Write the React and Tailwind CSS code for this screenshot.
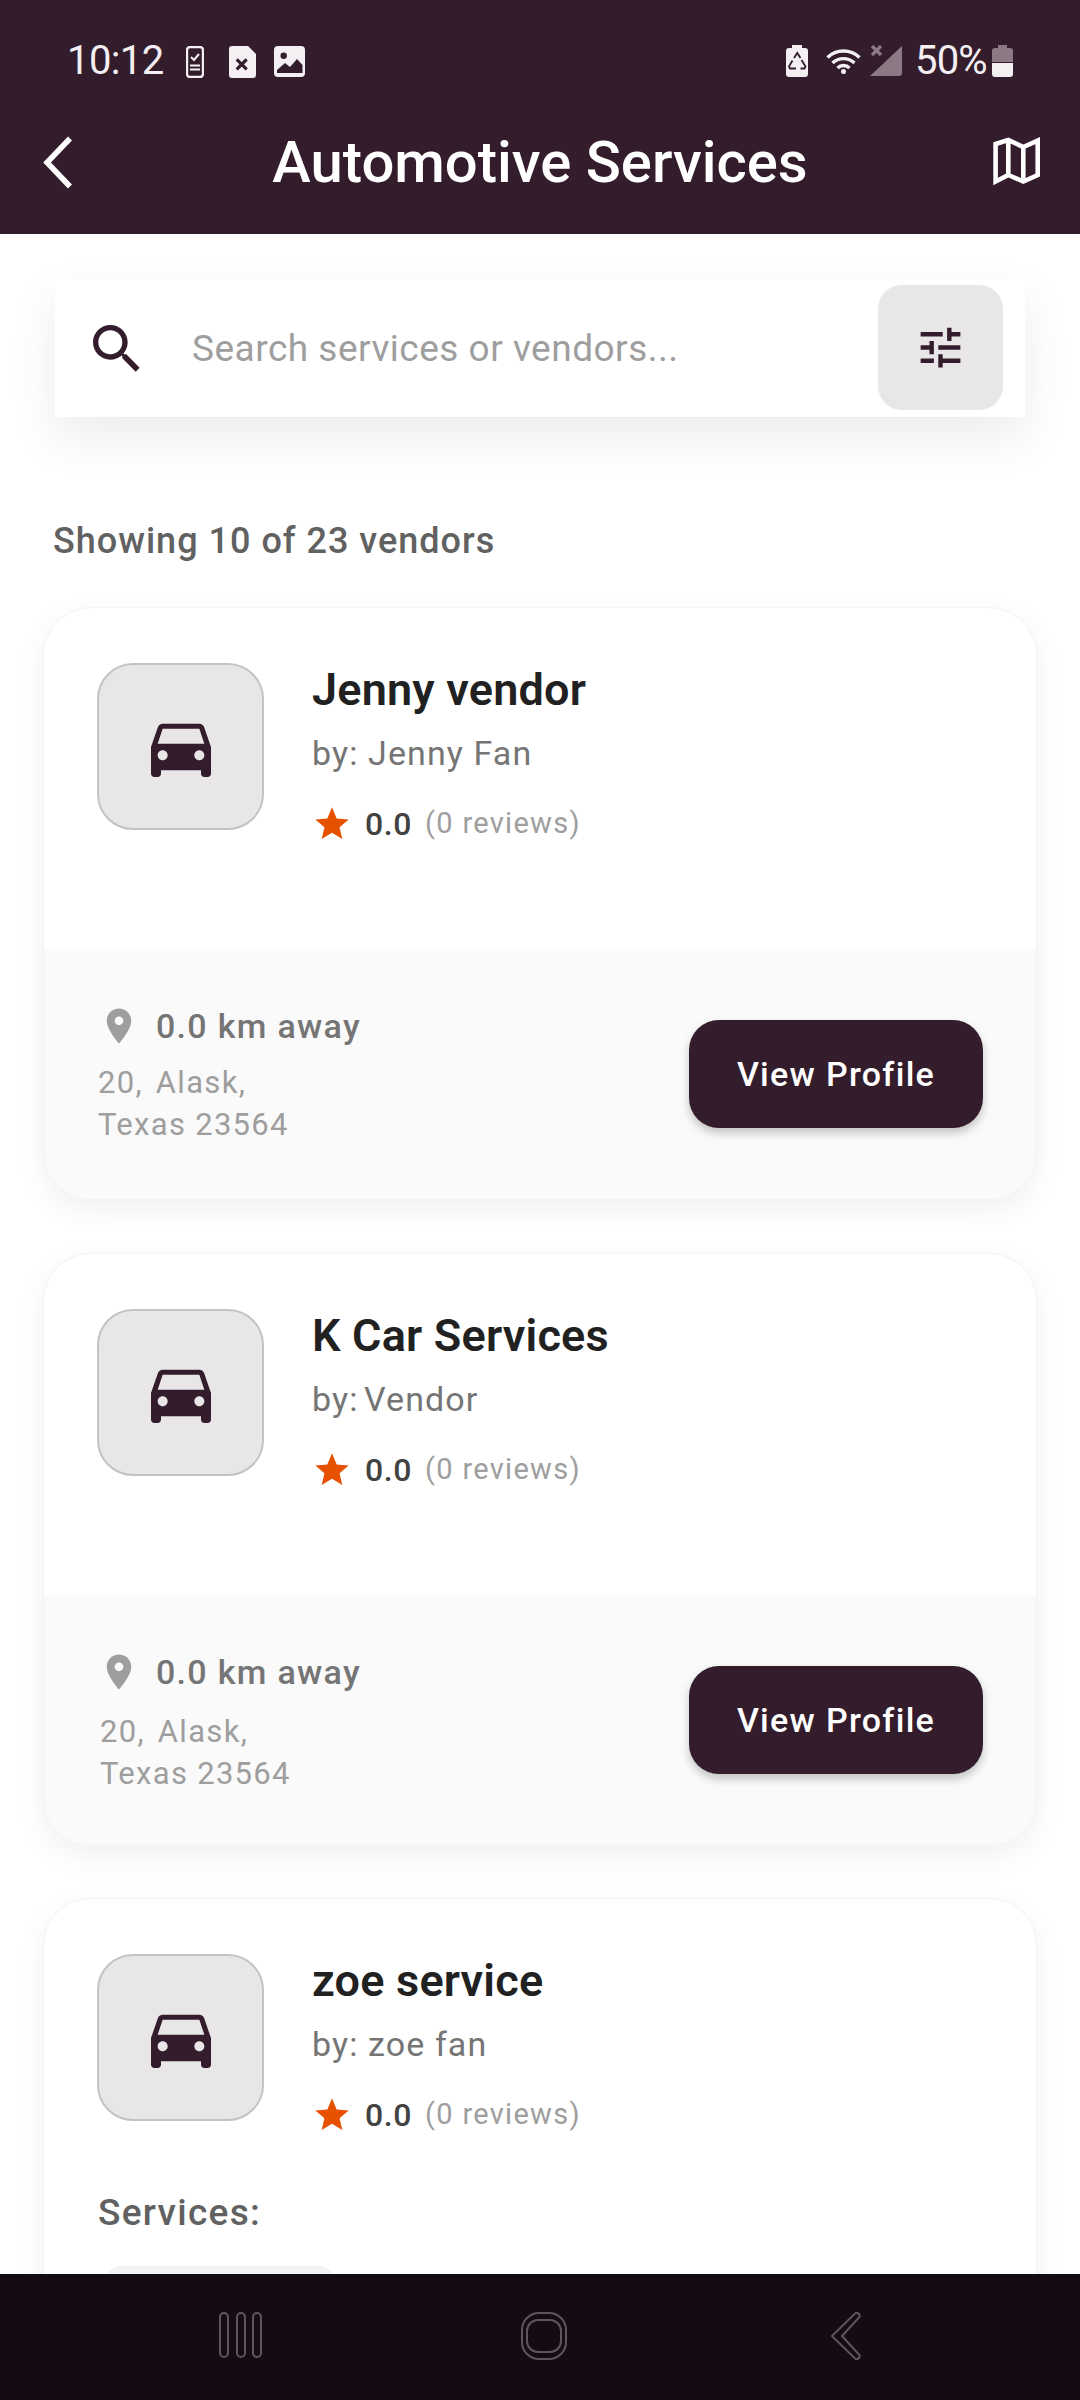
import React from "react";

const CAR = "M18.92 6.01C18.72 5.42 18.16 5 17.5 5h-11c-.66 0-1.21.42-1.42 1.01L3 12v8c0 .55.45 1 1 1h1c.55 0 1-.45 1-1v-1h12v1c0 .55.45 1 1 1h1c.55 0 1-.45 1-1v-8l-2.08-5.99zM6.5 16c-.83 0-1.5-.67-1.5-1.5S5.67 13 6.5 13s1.5.67 1.5 1.5S7.33 16 6.5 16zm11 0c-.83 0-1.5-.67-1.5-1.5s.67-1.5 1.5-1.5 1.5.67 1.5 1.5-.67 1.5-1.5 1.5zM5 11l1.5-4.5h11L19 11H5z";
const STAR = "M12 17.27L18.18 21l-1.64-7.03L22 9.24l-7.19-.61L12 2 9.19 8.63 2 9.24l5.46 4.73L5.82 21z";
const PIN = "M12 2C8.13 2 5 5.13 5 9c0 5.25 7 13 7 13s7-7.75 7-13c0-3.87-3.13-7-7-7zm0 9.5c-1.38 0-2.5-1.12-2.5-2.5s1.12-2.5 2.5-2.5 2.5 1.12 2.5 2.5-1.12 2.5-2.5 2.5z";
const SEARCH = "M15.5 14h-.79l-.28-.27C15.41 12.59 16 11.11 16 9.5 16 5.91 13.09 3 9.5 3S3 5.91 3 9.5 5.91 16 9.5 16c1.61 0 3.09-.59 4.23-1.57l.27.28v.79l5 4.99L20.49 19l-4.99-5zm-6 0C7.01 14 5 11.99 5 9.5S7.01 5 9.5 5 14 7.01 14 9.5 11.99 14 9.5 14z";
const TUNE = "M3 17v2h6v-2H3zM3 5v2h10V5H3zm10 16v-2h8v-2h-8v-2h-2v6h2zM7 9v2H3v2h4v2h2V9H7zm14 4v-2H11v2h10zm-6-4h2V7h4V5h-4V3h-2v6z";

function StatusBar() {
  return (
    <div className="flex h-[94px] items-end pb-[14px] pl-[67px] pr-[67px] text-[#f4eff2]">
      <span className="relative top-[1px] w-[99px] text-[40px] leading-[40px] tracking-[-0.6px]">10:12</span>
      <svg viewBox="0 0 18 32" className="relative top-[-2px] ml-[20px] h-[32px] w-[18px] shrink-0">
        <rect x="1" y="1" width="16" height="30" rx="3" fill="none" stroke="#f4eff2" strokeWidth="2.4" />
        <path d="M5 11l3 3 5-6" fill="none" stroke="#f4eff2" strokeWidth="2" />
        <path d="M4 19.5h10M4 23.5h10" stroke="#f4eff2" strokeWidth="2" />
      </svg>
      <svg viewBox="0 0 27 32" className="relative top-[-2px] ml-[25px] h-[32px] w-[27px] shrink-0">
        <path d="M3 0h16l8 8v21a3 3 0 0 1-3 3H3a3 3 0 0 1-3-3V3a3 3 0 0 1 3-3z" fill="#f4eff2" />
        <path d="M7.7 13.3l10 10M17.7 13.3l-10 10" stroke="#331d2c" strokeWidth="3.2" />
      </svg>
      <svg viewBox="0 0 31 31" className="relative top-[-3px] ml-[18px] h-[31px] w-[31px] shrink-0">
        <rect width="31" height="31" rx="4" fill="#f4eff2" />
        <circle cx="9.7" cy="9.7" r="3.2" fill="#331d2c" />
        <path d="M3 27v-3l8-7 5 4 7-8 5.5 6v8z" fill="#331d2c" />
      </svg>
      <div className="flex-1" />
      <svg viewBox="0 0 22 32" className="relative top-[-3px] h-[32px] w-[22px] shrink-0">
        <rect x="6" y="0" width="10" height="4" fill="#f4eff2" />
        <rect x="0" y="3" width="22" height="29" rx="3" fill="#f4eff2" />
        <path d="M8 13l3.3-5 3.2 5M15.5 15l4 6.5-1 2h-4M10 23.5H4l-1-2 3.5-6" fill="none" stroke="#331d2c" strokeWidth="1.8" />
      </svg>
      <svg viewBox="0 0 36 26" className="relative top-[-6px] ml-[17px] h-[26px] w-[37px] shrink-0">
        <path d="M2 9.5a23 23 0 0 1 32 0M7 15a16 16 0 0 1 22 0M12 20a8.5 8.5 0 0 1 12 0" fill="none" stroke="#f4eff2" strokeWidth="3.4" />
        <circle cx="18" cy="23.5" r="2.5" fill="#f4eff2" />
      </svg>
      <svg viewBox="0 0 32 31" className="relative top-[-4px] ml-[8px] h-[31px] w-[32px] shrink-0">
        <path d="M32 1v27a3 3 0 0 1-3 3H0z" fill="#8b7a86" />
        <path d="M2 1l9 9M11 1l-9 9" stroke="#8b7a86" strokeWidth="3.4" />
      </svg>
      <span className="relative top-[1px] ml-[13px] w-[74px] text-[40px] leading-[40px] tracking-[-0.8px]">50%</span>
      <svg viewBox="0 0 21 32" className="relative top-[-3px] ml-[3px] h-[32px] w-[21px] shrink-0">
        <rect x="6" y="0" width="9" height="4" fill="#8b7a86" />
        <path d="M3 3h15a3 3 0 0 1 3 3v11H0V6a3 3 0 0 1 3-3z" fill="#8b7a86" />
        <path d="M0 18h21v11a3 3 0 0 1-3 3H3a3 3 0 0 1-3-3z" fill="#f4eff2" />
      </svg>
    </div>
  );
}

function Header() {
  return (
    <header className="h-[234px] shrink-0 bg-[#331d2c]">
      <StatusBar />
      <div className="flex h-[140px] items-start pt-[24px]">
        <div className="flex w-[120px] justify-start pl-[43px] pt-[18px]">
          <svg viewBox="0 0 30 53" className="h-[53px] w-[30px]">
            <path d="M27 2.5L4 26.5l23 24" fill="none" stroke="#fff" strokeWidth="5.5" />
          </svg>
        </div>
        <h1 className="flex-1 pt-[9px] text-center text-[58px] font-medium leading-[70px] text-white">Automotive Services</h1>
        <div className="flex w-[120px] justify-end pr-[38px] pt-[17px]">
          <svg viewBox="0 0 52 52" className="h-[52px] w-[52px]">
            <path d="M5.6 9L18.3 5l15 7 14.4-6.4V40l-14.4 6.5-15-6.5-12.7 6.5zM18.3 5v35M33.3 12v34.5" fill="none" stroke="#fff" strokeWidth="4.6" />
          </svg>
        </div>
      </div>
    </header>
  );
}

function SearchBar() {
  return (
    <div className="mx-[55px] mt-[46px] flex h-[137px] items-center bg-white pl-[30px] pr-[21px] shadow-[0_20px_50px_rgba(0,0,0,0.08)]">
      <svg viewBox="0 0 24 24" className="h-[64px] w-[64px] shrink-0 fill-[#331d2c]">
        <path d={SEARCH} />
      </svg>
      <span className="ml-[43px] flex-1 text-[37px] leading-[48px] tracking-[0.5px] text-[#9e9e9e]">Search services or vendors...</span>
      <div className="relative left-[-1px] top-[-1px] flex h-[125px] w-[125px] items-center justify-center rounded-[24px] bg-[#e9e6e8]">
        <svg viewBox="0 0 24 24" className="h-[53px] w-[53px] fill-[#331d2c]">
          <path d={TUNE} />
        </svg>
      </div>
    </div>
  );
}

function CardTop({ name, by }) {
  return (
    <div className="flex">
      <div className="flex h-[167px] w-[167px] shrink-0 items-center justify-center rounded-[36px] border-2 border-[#c4c2c3] bg-[#e9e6e8]">
        <svg viewBox="0 0 24 24" className="h-[80px] w-[80px] fill-[#331d2c]">
          <path d={CAR} />
        </svg>
      </div>
      <div className="ml-[48px] pt-[2px]">
        <div className="text-[45px] font-semibold leading-[50px] tracking-[0.2px] text-[#212121]">{name}</div>
        <div className="mt-[18px] text-[34px] leading-[40px] tracking-[1.1px] text-[#757575]">{by}</div>
        <div className="mt-[29px] flex h-[44px] items-center">
          <svg viewBox="0 0 24 24" className="h-[40px] w-[40px] shrink-0 fill-[#e65100]">
            <path d={STAR} />
          </svg>
          <span className="ml-[13px] text-[32px] font-medium tracking-[0.6px] text-[#424242]">0.0</span>
          <span className="ml-[13px] text-[29px] tracking-[1.3px] text-[#9e9e9e]">(0 reviews)</span>
        </div>
      </div>
    </div>
  );
}

function Card({ name, by, leftBlock, addressPad, gap }) {
  return (
    <div className={`mx-[43px] overflow-hidden rounded-[48px] border border-[#f3f3f3] bg-white shadow-[0_10px_30px_rgba(0,0,0,0.06)] ${gap}`}>
      <div className="h-[341px] pl-[53px] pt-[55px]">
        <CardTop name={name} by={by} />
      </div>
      <div className="flex h-[250px] items-center justify-between bg-[#fafafa] pl-[54px] pr-[53px]">
        <div className={leftBlock}>
          <div className="flex items-center">
            <svg viewBox="0 0 24 24" className="h-[42px] w-[42px] shrink-0 fill-[#9e9e9e]">
              <path d={PIN} />
            </svg>
            <span className="ml-[16px] text-[34px] font-medium leading-[44px] tracking-[1.3px] text-[#757575]">0.0 km away</span>
          </div>
          <div className={`text-[31px] leading-[42px] tracking-[1.3px] text-[#9e9e9e] ${addressPad}`}>
            <div><span className="mr-[4px]">20,</span> Alask,</div>
            <div>Texas 23564</div>
          </div>
        </div>
        <div className="flex h-[108px] w-[294px] items-center justify-center rounded-[30px] bg-[#331d2c] text-[34px] font-medium tracking-[1.3px] text-white shadow-[0_5px_10px_rgba(0,0,0,0.22)]">
          View Profile
        </div>
      </div>
    </div>
  );
}

function LastCard() {
  return (
    <div className="mx-[43px] h-[600px] rounded-t-[48px] border border-[#f3f3f3] bg-white pl-[53px] pt-[55px] shadow-[0_10px_30px_rgba(0,0,0,0.06)]">
      <CardTop name="zoe service" by="by: zoe fan" />
      <div className="mt-[54px] ml-[1px] text-[37px] font-medium leading-[44px] tracking-[1.3px] text-[#616161]">Services:</div>
      <div className="mt-[31px] ml-[3px] h-[80px] w-[240px] rounded-[24px] border border-[#eeeeee] bg-[#f5f5f5]" />
    </div>
  );
}

function NavBar() {
  const stroke = "#5d565b";
  return (
    <nav className="flex h-[126px] shrink-0 items-start bg-[#150c13] pt-[38px]">
      <div className="ml-[218px]">
        <svg viewBox="0 0 46 46" className="h-[46px] w-[46px]">
          <g fill="none" stroke={stroke} strokeWidth="2">
            <rect x="2" y="1" width="8" height="44" rx="4" />
            <rect x="19" y="1" width="8" height="44" rx="4" />
            <rect x="35" y="1" width="8" height="44" rx="4" />
          </g>
        </svg>
      </div>
      <div className="ml-[257px]">
        <svg viewBox="0 0 46 48" className="h-[48px] w-[46px]">
          <g fill="none" stroke={stroke} strokeWidth="2">
            <rect x="1" y="1" width="44" height="46" rx="17" />
            <rect x="6" y="8" width="34" height="32" rx="11" />
          </g>
        </svg>
      </div>
      <div className="ml-[263px]">
        <svg viewBox="0 0 31 48" className="h-[48px] w-[31px]">
          <path d="M25 1.5a3 3 0 0 1 4.5 3.5L12 24l17.5 19a3 3 0 0 1-4.5 3.5L2 24z" fill="none" stroke={stroke} strokeWidth="2" />
        </svg>
      </div>
    </nav>
  );
}

export default function App() {
  return (
    <div className="flex h-[2400px] w-[1080px] flex-col overflow-hidden bg-white" style={{ fontFamily: "Roboto, sans-serif" }}>
      <Header />
      <main className="min-h-0 flex-1 overflow-hidden">
        <SearchBar />
        <div className="mb-[44px] ml-[53px] mt-[102px] text-[36px] font-medium leading-[44px] tracking-[1px] text-[#616161]">Showing 10 of 23 vendors</div>
        <Card name="Jenny vendor" by="by: Jenny Fan" leftBlock="pt-[2px]" addressPad="mt-[14px]" gap="mb-[53px]" />
        <Card name="K Car Services" by={<>by:<span className="ml-[-4px]"> Vendor</span></>} leftBlock="pt-[4px]" addressPad="mt-[17px] pl-[2px]" gap="mb-[52px]" />
        <LastCard />
      </main>
      <NavBar />
    </div>
  );
}
